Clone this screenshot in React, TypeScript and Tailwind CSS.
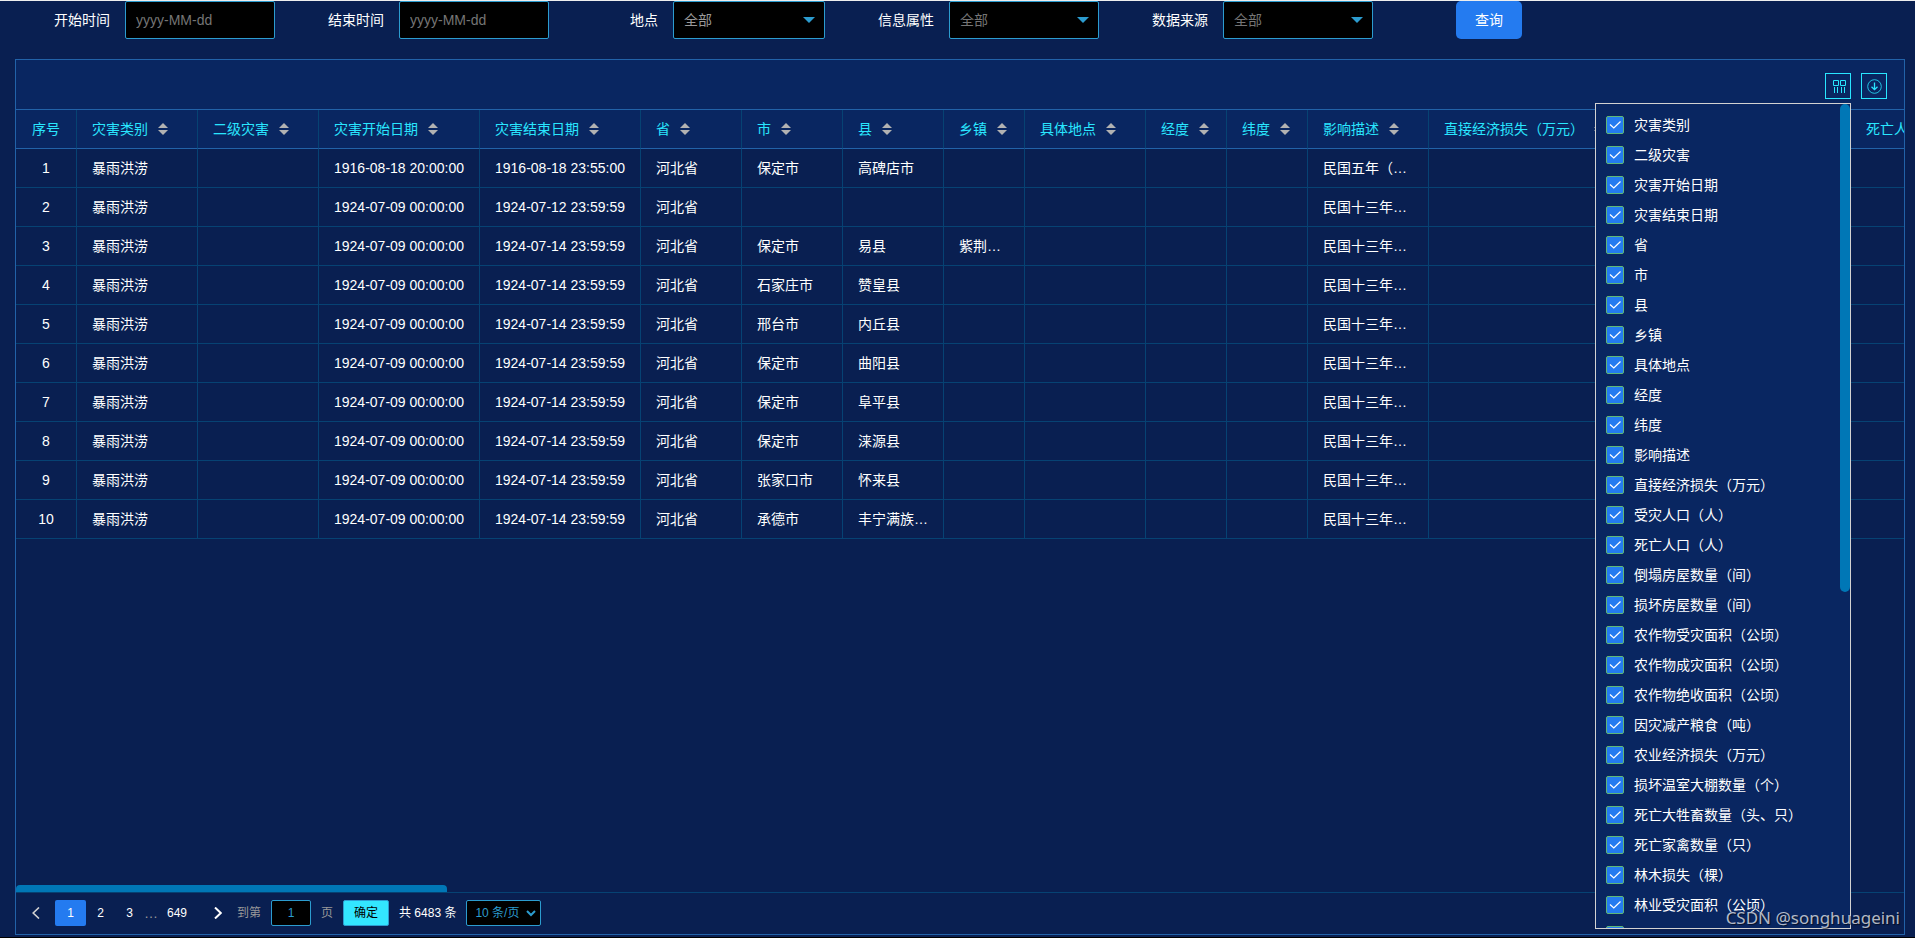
import React, { useState } from 'react';

interface Column {
  key: string;
  title: string;
  width: string;
}

type Row = string[];

const COLUMNS: Column[] = [
  { key: 'type', title: '灾害类别', width: 'w-[121px]' },
  { key: 'subType', title: '二级灾害', width: 'w-[121px]' },
  { key: 'start', title: '灾害开始日期', width: 'w-[161px]' },
  { key: 'end', title: '灾害结束日期', width: 'w-[161px]' },
  { key: 'province', title: '省', width: 'w-[101px]' },
  { key: 'city', title: '市', width: 'w-[101px]' },
  { key: 'county', title: '县', width: 'w-[101px]' },
  { key: 'town', title: '乡镇', width: 'w-[81px]' },
  { key: 'place', title: '具体地点', width: 'w-[121px]' },
  { key: 'lng', title: '经度', width: 'w-[81px]' },
  { key: 'lat', title: '纬度', width: 'w-[81px]' },
  { key: 'desc', title: '影响描述', width: 'w-[121px]' },
  { key: 'loss', title: '直接经济损失（万元）', width: 'w-[211px]' },
  { key: 'affected', title: '受灾人口（人）', width: 'w-[211px]' },
  { key: 'dead', title: '死亡人口（人）', width: 'w-[161px]' },
];

// type, subType, start, end, province, city, county, town, place, lng, lat, desc
const ROWS: Row[] = [
  ['暴雨洪涝', '', '1916-08-18 20:00:00', '1916-08-18 23:55:00', '河北省', '保定市', '高碑店市', '', '', '', '', '民国五年（…'],
  ['暴雨洪涝', '', '1924-07-09 00:00:00', '1924-07-12 23:59:59', '河北省', '', '', '', '', '', '', '民国十三年…'],
  ['暴雨洪涝', '', '1924-07-09 00:00:00', '1924-07-14 23:59:59', '河北省', '保定市', '易县', '紫荆…', '', '', '', '民国十三年…'],
  ['暴雨洪涝', '', '1924-07-09 00:00:00', '1924-07-14 23:59:59', '河北省', '石家庄市', '赞皇县', '', '', '', '', '民国十三年…'],
  ['暴雨洪涝', '', '1924-07-09 00:00:00', '1924-07-14 23:59:59', '河北省', '邢台市', '内丘县', '', '', '', '', '民国十三年…'],
  ['暴雨洪涝', '', '1924-07-09 00:00:00', '1924-07-14 23:59:59', '河北省', '保定市', '曲阳县', '', '', '', '', '民国十三年…'],
  ['暴雨洪涝', '', '1924-07-09 00:00:00', '1924-07-14 23:59:59', '河北省', '保定市', '阜平县', '', '', '', '', '民国十三年…'],
  ['暴雨洪涝', '', '1924-07-09 00:00:00', '1924-07-14 23:59:59', '河北省', '保定市', '涞源县', '', '', '', '', '民国十三年…'],
  ['暴雨洪涝', '', '1924-07-09 00:00:00', '1924-07-14 23:59:59', '河北省', '张家口市', '怀来县', '', '', '', '', '民国十三年…'],
  ['暴雨洪涝', '', '1924-07-09 00:00:00', '1924-07-14 23:59:59', '河北省', '承德市', '丰宁满族…', '', '', '', '', '民国十三年…'],
];

const FIELDS = [
  '灾害类别', '二级灾害', '灾害开始日期', '灾害结束日期', '省', '市', '县', '乡镇', '具体地点',
  '经度', '纬度', '影响描述', '直接经济损失（万元）', '受灾人口（人）', '死亡人口（人）',
  '倒塌房屋数量（间）', '损坏房屋数量（间）', '农作物受灾面积（公顷）', '农作物成灾面积（公顷）',
  '农作物绝收面积（公顷）', '因灾减产粮食（吨）', '农业经济损失（万元）', '损坏温室大棚数量（个）',
  '死亡大牲畜数量（头、只）', '死亡家禽数量（只）', '林木损失（棵）', '林业受灾面积（公顷）',
  '林业成灾面积（公顷）',
];

const SortIcon = () => (
  <svg width="10" height="12" viewBox="0 0 10 12" className="ml-[10px] shrink-0 fill-[#b2b2b2]">
    <path d="M5 0 L10 5 H0 Z" />
    <path d="M0 7 H10 L5 12 Z" />
  </svg>
);

const DateField: React.FC<{ id: string; label: string }> = ({ id, label }) => (
  <div className="flex items-center">
    <label htmlFor={id} className="w-[124px] pr-[15px] text-right">{label}</label>
    <input
      id={id}
      type="text"
      placeholder="yyyy-MM-dd"
      className="w-[150px] h-[38px] px-[10px] bg-black border border-[#2c9ccf] rounded-xs placeholder:text-[#757575] outline-none"
    />
  </div>
);

const SelectField: React.FC<{ id: string; label: string; className: string }> = ({ id, label, className }) => (
  <div className="flex items-center">
    <label htmlFor={id} className="w-[124px] pr-[15px] text-right">{label}</label>
    <div className="relative">
      <select
        id={id}
        className={`h-[38px] px-[10px] bg-black border border-[#2c9ccf] rounded-xs appearance-none outline-none ${className}`}
      >
        <option>全部</option>
      </select>
      <svg width="12" height="6" viewBox="0 0 12 6" className="absolute right-[10px] top-4 pointer-events-none fill-[#2c9ccf]">
        <path d="M0 0 H12 L6 6 Z" />
      </svg>
    </div>
  </div>
);

const ColumnPicker = () => {
  const [hidden, setHidden] = useState<string[]>([]);

  const toggle = (name: string) =>
    setHidden((list) => (list.includes(name) ? list.filter((n) => n !== name) : [...list, name]));

  return (
    <div className="absolute top-[30px] right-0 z-10 w-[256px] max-h-[calc(100vh-112px)] overflow-hidden bg-[#092661] border border-[#d2d2d2] pt-[6px] pl-[10px]">
      {FIELDS.map((name) => (
        <label key={name} className="flex items-center h-[30px] text-white">
          <span className="relative w-[18px] h-[18px] mr-[10px]">
            <input
              type="checkbox"
              checked={!hidden.includes(name)}
              onChange={() => toggle(name)}
              className="peer block w-[18px] h-[18px] appearance-none rounded-xs border border-[#5fb878] checked:bg-[#247bf0]"
            />
            <svg viewBox="0 0 18 18" className="absolute inset-0 pointer-events-none hidden peer-checked:block">
              <path d="M4 8.5 L7.8 12 L14.5 5.5" fill="none" stroke="#fff" strokeWidth="1.2" />
            </svg>
          </span>
          {name}
        </label>
      ))}
      <div className="absolute top-0 right-0 w-[10px] h-[488px] rounded-full bg-[#0077b6]" />
    </div>
  );
};

const Pagination = () => (
  <div className="flex items-start border-t border-[#064273] pt-[7px] pb-2 text-xs text-white">
    <button aria-label="上一页" className="w-[39px] h-[26px] flex items-center justify-center">
      <svg width="8" height="12" viewBox="0 0 8 12" fill="none" stroke="#d2d2d2" strokeWidth="1.6">
        <path d="M7 0.5 L1.2 6 L7 11.5" />
      </svg>
    </button>
    <button className="w-[31px] h-[26px] rounded-xs bg-[#247bf0]">1</button>
    <button className="w-[29px] h-[26px]">2</button>
    <button className="w-[29px] h-[26px]">3</button>
    <span className="w-3 leading-[26px] text-sm text-[#999]">…</span>
    <button className="w-[42px] h-[26px]">649</button>
    <button aria-label="下一页" className="w-[39px] h-[26px] flex items-center justify-center">
      <svg width="8" height="12" viewBox="0 0 8 12" fill="none" stroke="#fff" strokeWidth="2">
        <path d="M1 0.5 L6.8 6 L1 11.5" />
      </svg>
    </button>
    <div className="flex items-center gap-[10px] h-[26px]">
      <label htmlFor="page" className="text-[#999]">到第</label>
      <input
        id="page"
        type="text"
        defaultValue="1"
        className="w-10 h-[26px] text-center bg-black border border-[#2c9ccf] rounded-xs text-[#2c9ccf] outline-none"
      />
      <span className="text-[#999]">页</span>
      <button className="w-[46px] h-[26px] bg-[#33e6ff] border border-[#2c9ccf] rounded-xs text-black">确定</button>
      <span>共 6483 条</span>
      <div className="relative">
        <select
          aria-label="每页条数"
          className="w-[75px] h-[26px] pl-2 bg-black border border-[#2c9ccf] rounded-xs text-[#2c9ccf] appearance-none outline-none"
        >
          <option>10 条/页</option>
        </select>
        <svg width="10" height="7" viewBox="0 0 10 7" fill="none" stroke="#2c9ccf" strokeWidth="2" className="absolute right-[5px] top-[10px] pointer-events-none">
          <path d="M1 1 L5 5 L9 1" />
        </svg>
      </div>
    </div>
  </div>
);

export default function App() {
  const [pickerOpen, setPickerOpen] = useState(true);

  return (
    <div className="relative flex flex-col h-screen overflow-hidden bg-[#091f51] border-t border-t-[#eee] border-b border-b-black pb-[2px] text-sm text-white font-['Liberation_Sans','Noto_Sans_CJK_SC',sans-serif]">
      <form className="flex items-center pl-px" onSubmit={(e) => e.preventDefault()}>
        <DateField id="start" label="开始时间" />
        <DateField id="end" label="结束时间" />
        <SelectField id="place" label="地点" className="w-[152px] text-[#999]" />
        <SelectField id="attr" label="信息属性" className="w-[150px] text-[#757575]" />
        <SelectField id="source" label="数据来源" className="w-[150px] text-[#757575]" />
        <button type="submit" className="ml-[83px] w-[66px] h-[38px] rounded-[5px] bg-[#247bf0]">查询</button>
      </form>

      <div className="flex flex-col flex-1 min-h-0 mt-5 ml-[15px] mr-[10px] border border-[#2262a8]">
        <div className="flex justify-end items-start gap-[10px] h-[50px] pt-[13px] pr-[17px] bg-[#092661] border-b border-[#2262a8]">
          <div className="relative">
            <button
              aria-label="筛选列"
              onClick={() => setPickerOpen(!pickerOpen)}
              className="w-[26px] h-[26px] flex items-center justify-center border border-[#29e6ff]"
            >
              <svg width="16" height="14" viewBox="0 0 16 14" fill="none" stroke="#29e6ff">
                <path d="M3.5 1.5 H8.5 V6.5 H3.5 Z M10.5 1.5 H15.5 V6.5 H10.5 Z M4.5 8 V14 M7.5 8 V14 M11.5 8 V14 M14.5 8 V14" />
              </svg>
            </button>
            {pickerOpen && <ColumnPicker />}
          </div>
          <button aria-label="导出" className="w-[26px] h-[26px] flex items-center justify-center border border-[#29e6ff]">
            <svg width="16" height="16" viewBox="0 0 16 16" fill="none" stroke="#29e6ff">
              <circle cx="8.5" cy="8.5" r="6.8" strokeWidth="0.8" />
              <path d="M8.5 4.5 V11.5 M5.5 8.7 L8.5 11.7 L11.5 8.7" strokeWidth="1.3" />
            </svg>
          </button>
        </div>

        <div className="flex-1 min-h-0 overflow-hidden">
          <table className="table-fixed w-0 border-separate border-spacing-0">
            <thead>
              <tr className="h-[39px] bg-[#092661] text-[#29e6ff]">
                <th className="w-[61px] p-0 font-normal text-center border-r border-b border-r-[#064273] border-b-[#2262a8]">序号</th>
                {COLUMNS.map((col) => (
                  <th key={col.key} className={`${col.width} p-0 px-[15px] font-normal border-r border-b border-r-[#064273] border-b-[#2262a8]`}>
                    <div className="flex items-center whitespace-nowrap">
                      {col.title}
                      <SortIcon />
                    </div>
                  </th>
                ))}
              </tr>
            </thead>
            <tbody>
              {ROWS.map((row, i) => (
                <tr key={i} className="h-[39px]">
                  <td className="p-0 text-center border-r border-b border-[#064273]">{i + 1}</td>
                  {COLUMNS.map((col, j) => (
                    <td key={col.key} className="p-0 px-[15px] whitespace-nowrap border-r border-b border-[#064273]">
                      {row[j]}
                    </td>
                  ))}
                </tr>
              ))}
            </tbody>
          </table>
        </div>

        <div className="w-[431px] h-[7px] rounded-t bg-[#0077b6]" />
        <Pagination />
      </div>

      <div className="absolute right-[15px] bottom-[7px] z-20 font-['Noto_Sans'] text-[17px] leading-6 text-white/70 [text-shadow:1px_1px_1px_rgba(0,0,0,0.6)]">
        CSDN @songhuageini
      </div>
    </div>
  );
}
